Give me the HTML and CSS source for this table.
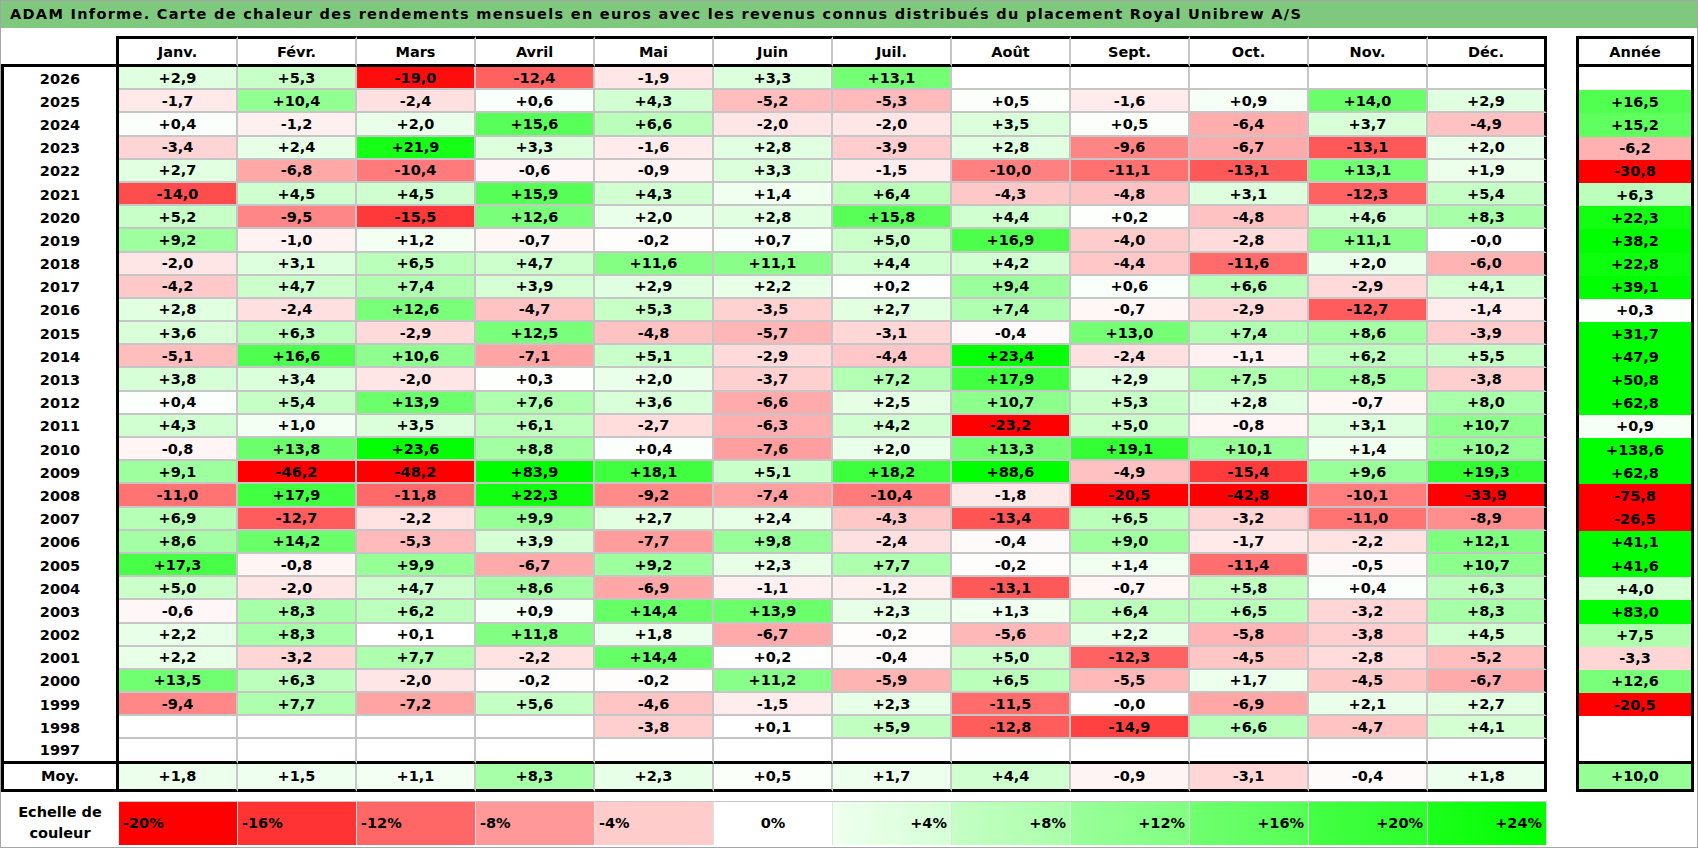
FILE: index.html
```html
<!DOCTYPE html>
<html lang="fr">
<head>
<meta charset="utf-8">
<title>ADAM Informe - Royal Unibrew A/S</title>
<link rel="stylesheet" href="styles.css">
</head>
<body>
<div class="sheet">
  <div class="title">ADAM Informe. Carte de chaleur des rendements mensuels en euros avec les revenus connus distribués du placement Royal Unibrew A/S</div>
  <div class="tables">
    <div class="main" id="main">
      <div class="row head">
        <div class="c corner"></div>
        <div class="c">Janv.</div>
        <div class="c">Févr.</div>
        <div class="c">Mars</div>
        <div class="c">Avril</div>
        <div class="c">Mai</div>
        <div class="c">Juin</div>
        <div class="c">Juil.</div>
        <div class="c">Août</div>
        <div class="c">Sept.</div>
        <div class="c">Oct.</div>
        <div class="c">Nov.</div>
        <div class="c">Déc.</div>
      </div>
    </div>
    <div class="annual" id="annual">
      <div class="ahead">Année</div>
    </div>
  </div>
  <div class="scale" id="scale">
    <div class="lbl">Echelle de<br>couleur</div>
  </div>
</div>
<script src="script.js"></script>
</body>
</html>
```
FILE: styles.css
```css
* { box-sizing: border-box; }
body {
  margin: 0;
  font-family: "DejaVu Sans", "Liberation Sans", sans-serif;
  font-weight: bold;
  font-size: 14.5px;
  color: #000;
  background: #fff;
}
.sheet {
  width: 1698px;
  height: 848px;
  border: 1px solid #a6a6a6;
  background: #fff;
  overflow: hidden;
}
.title {
  height: 27px;
  line-height: 27px;
  padding-left: 9px;
  background: #7fc97f;
  white-space: nowrap;
  letter-spacing: 1.3px;
}
.tables {
  display: flex;
  margin-top: 8px;
}
.main { width: 1546px; }
.row {
  display: grid;
  grid-template-columns: 118px repeat(12, 119px);
}
.head { height: 31px; }
.data { height: 23.2px; }
.data.last { height: 24.2px; }
.moy { height: 28px; }
.c {
  display: flex;
  align-items: center;
  justify-content: center;
  white-space: nowrap;
}
.head .c {
  border-top: 3px solid #000;
  border-bottom: 3px solid #000;
  border-right: 2px solid #c6c6c6;
}
.head .corner {
  border-top: 0;
  border-right: 3px solid #000;
}
.data .c {
  border-right: 2px solid #c6c6c6;
  border-bottom: 2px solid #c6c6c6;
}
.moy .c {
  border-right: 2px solid #c6c6c6;
  border-bottom: 3px solid #000;
}
.data.last .c { border-bottom: 3px solid #000; }
.data .yr, .moy .yr {
  border-left: 3px solid #000;
  border-right: 3px solid #000;
}
.data .yr { border-bottom: 0; }
.data.last .yr { border-bottom: 3px solid #000; }
.head .c:last-child,
.data .c:last-child,
.moy .c:last-child { border-right: 3px solid #000; }

.annual {
  width: 118px;
  margin-left: 29px;
}
.ahead, .acell, .amoy {
  display: flex;
  align-items: center;
  justify-content: center;
  border-left: 3px solid #000;
  border-right: 3px solid #000;
}
.ahead { height: 31px; border-top: 3px solid #000; border-bottom: 3px solid #000; }
.acell { height: 23.2px; }
.acell.last { height: 24.2px; border-bottom: 3px solid #000; }
.amoy { height: 28px; border-bottom: 3px solid #000; }

.scale {
  display: grid;
  grid-template-columns: 118px repeat(12, 119px);
  height: 44px;
  margin-top: 9px;
}
.lbl {
  display: flex;
  align-items: center;
  justify-content: center;
  text-align: center;
  line-height: 21px;
}
.sc {
  display: flex;
  align-items: center;
  padding: 0 4px;
  border-top: 1px solid #c8c8c8;
  border-right: 1px solid #e2e2e2;
}
.sc.neg { justify-content: flex-start; }
.sc.zero { justify-content: center; }
.sc.pos { justify-content: flex-end; }
```
FILE: script.js
```js
var rows = [
['2026',['+2,9','+5,3','-19,0','-12,4','-1,9','+3,3','+13,1','','','','',''],''],
['2025',['-1,7','+10,4','-2,4','+0,6','+4,3','-5,2','-5,3','+0,5','-1,6','+0,9','+14,0','+2,9'],'+16,5'],
['2024',['+0,4','-1,2','+2,0','+15,6','+6,6','-2,0','-2,0','+3,5','+0,5','-6,4','+3,7','-4,9'],'+15,2'],
['2023',['-3,4','+2,4','+21,9','+3,3','-1,6','+2,8','-3,9','+2,8','-9,6','-6,7','-13,1','+2,0'],'-6,2'],
['2022',['+2,7','-6,8','-10,4','-0,6','-0,9','+3,3','-1,5','-10,0','-11,1','-13,1','+13,1','+1,9'],'-30,8'],
['2021',['-14,0','+4,5','+4,5','+15,9','+4,3','+1,4','+6,4','-4,3','-4,8','+3,1','-12,3','+5,4'],'+6,3'],
['2020',['+5,2','-9,5','-15,5','+12,6','+2,0','+2,8','+15,8','+4,4','+0,2','-4,8','+4,6','+8,3'],'+22,3'],
['2019',['+9,2','-1,0','+1,2','-0,7','-0,2','+0,7','+5,0','+16,9','-4,0','-2,8','+11,1','-0,0'],'+38,2'],
['2018',['-2,0','+3,1','+6,5','+4,7','+11,6','+11,1','+4,4','+4,2','-4,4','-11,6','+2,0','-6,0'],'+22,8'],
['2017',['-4,2','+4,7','+7,4','+3,9','+2,9','+2,2','+0,2','+9,4','+0,6','+6,6','-2,9','+4,1'],'+39,1'],
['2016',['+2,8','-2,4','+12,6','-4,7','+5,3','-3,5','+2,7','+7,4','-0,7','-2,9','-12,7','-1,4'],'+0,3'],
['2015',['+3,6','+6,3','-2,9','+12,5','-4,8','-5,7','-3,1','-0,4','+13,0','+7,4','+8,6','-3,9'],'+31,7'],
['2014',['-5,1','+16,6','+10,6','-7,1','+5,1','-2,9','-4,4','+23,4','-2,4','-1,1','+6,2','+5,5'],'+47,9'],
['2013',['+3,8','+3,4','-2,0','+0,3','+2,0','-3,7','+7,2','+17,9','+2,9','+7,5','+8,5','-3,8'],'+50,8'],
['2012',['+0,4','+5,4','+13,9','+7,6','+3,6','-6,6','+2,5','+10,7','+5,3','+2,8','-0,7','+8,0'],'+62,8'],
['2011',['+4,3','+1,0','+3,5','+6,1','-2,7','-6,3','+4,2','-23,2','+5,0','-0,8','+3,1','+10,7'],'+0,9'],
['2010',['-0,8','+13,8','+23,6','+8,8','+0,4','-7,6','+2,0','+13,3','+19,1','+10,1','+1,4','+10,2'],'+138,6'],
['2009',['+9,1','-46,2','-48,2','+83,9','+18,1','+5,1','+18,2','+88,6','-4,9','-15,4','+9,6','+19,3'],'+62,8'],
['2008',['-11,0','+17,9','-11,8','+22,3','-9,2','-7,4','-10,4','-1,8','-20,5','-42,8','-10,1','-33,9'],'-75,8'],
['2007',['+6,9','-12,7','-2,2','+9,9','+2,7','+2,4','-4,3','-13,4','+6,5','-3,2','-11,0','-8,9'],'-26,5'],
['2006',['+8,6','+14,2','-5,3','+3,9','-7,7','+9,8','-2,4','-0,4','+9,0','-1,7','-2,2','+12,1'],'+41,1'],
['2005',['+17,3','-0,8','+9,9','-6,7','+9,2','+2,3','+7,7','-0,2','+1,4','-11,4','-0,5','+10,7'],'+41,6'],
['2004',['+5,0','-2,0','+4,7','+8,6','-6,9','-1,1','-1,2','-13,1','-0,7','+5,8','+0,4','+6,3'],'+4,0'],
['2003',['-0,6','+8,3','+6,2','+0,9','+14,4','+13,9','+2,3','+1,3','+6,4','+6,5','-3,2','+8,3'],'+83,0'],
['2002',['+2,2','+8,3','+0,1','+11,8','+1,8','-6,7','-0,2','-5,6','+2,2','-5,8','-3,8','+4,5'],'+7,5'],
['2001',['+2,2','-3,2','+7,7','-2,2','+14,4','+0,2','-0,4','+5,0','-12,3','-4,5','-2,8','-5,2'],'-3,3'],
['2000',['+13,5','+6,3','-2,0','-0,2','-0,2','+11,2','-5,9','+6,5','-5,5','+1,7','-4,5','-6,7'],'+12,6'],
['1999',['-9,4','+7,7','-7,2','+5,6','-4,6','-1,5','+2,3','-11,5','-0,0','-6,9','+2,1','+2,7'],'-20,5'],
['1998',['','','','','-3,8','+0,1','+5,9','-12,8','-14,9','+6,6','-4,7','+4,1'],''],
['1997',['','','','','','','','','','','',''],'']
];
var moy = ['+1,8','+1,5','+1,1','+8,3','+2,3','+0,5','+1,7','+4,4','-0,9','-3,1','-0,4','+1,8'];
var moyYear = '+10,0';

function num(s) { return parseFloat(s.replace(',', '.')); }
function col(v) {
  var t, c;
  if (v < 0) {
    t = Math.min(1, -v / 20);
    c = Math.round(255 * (1 - t));
    return 'rgb(255,' + c + ',' + c + ')';
  }
  t = Math.min(1, v / 24);
  c = Math.round(255 * (1 - t));
  return 'rgb(' + c + ',255,' + c + ')';
}
function el(cls, text) {
  var d = document.createElement('div');
  d.className = cls;
  if (text) d.textContent = text;
  return d;
}
function valCell(cls, s) {
  var d = el(cls, s);
  if (s !== '') d.style.background = col(num(s));
  return d;
}

var main = document.getElementById('main');
var annual = document.getElementById('annual');
rows.forEach(function (r, i) {
  var last = i === rows.length - 1;
  var row = el('row data' + (last ? ' last' : ''));
  row.appendChild(el('c yr', r[0]));
  r[1].forEach(function (v) { row.appendChild(valCell('c', v)); });
  main.appendChild(row);
  annual.appendChild(valCell('acell' + (last ? ' last' : ''), r[2]));
});
var mrow = el('row moy');
mrow.appendChild(el('c yr', 'Moy.'));
moy.forEach(function (v) { mrow.appendChild(valCell('c', v)); });
main.appendChild(mrow);
annual.appendChild(valCell('amoy', moyYear));

var scale = document.getElementById('scale');
[-20, -16, -12, -8, -4, 0, 4, 8, 12, 16, 20, 24].forEach(function (v) {
  var kind = v < 0 ? 'neg' : (v === 0 ? 'zero' : 'pos');
  var d = el('sc ' + kind, (v > 0 ? '+' : '') + v + '%');
  if (v > 0) {
    d.style.background = 'linear-gradient(to right, ' + col(v - 2.5) + ', ' + col(v) + ')';
  } else {
    d.style.background = col(v);
  }
  scale.appendChild(d);
});
```
